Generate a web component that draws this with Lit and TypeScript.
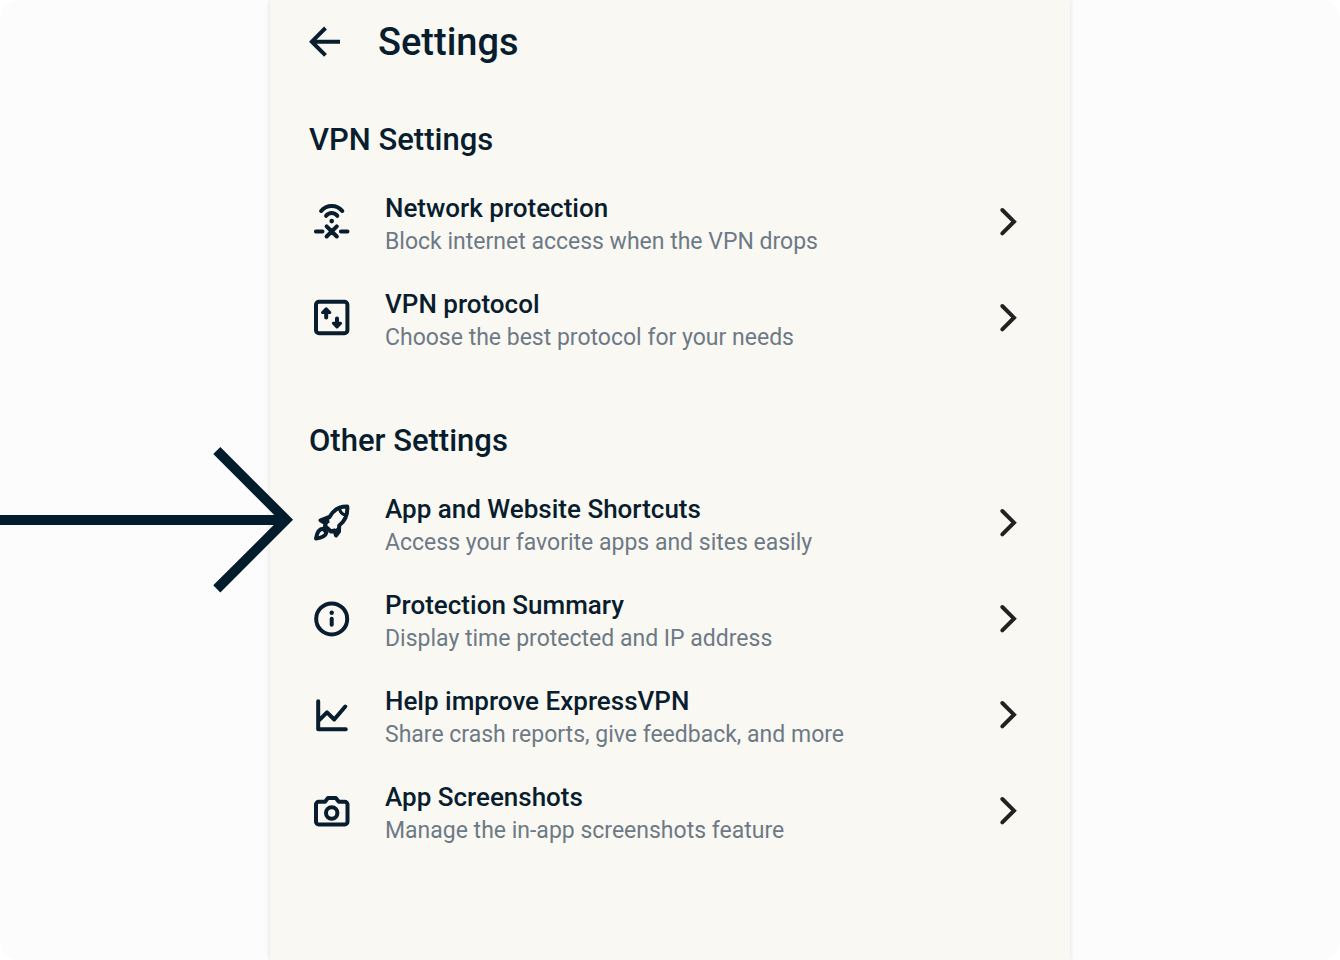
import { LitElement, html, css, svg, SVGTemplateResult } from "lit";
import { customElement, property } from "lit/decorators.js";

type IconName = "network" | "protocol" | "rocket" | "info" | "chart" | "camera";

interface SettingItem {
  icon: IconName;
  title: string;
  detail: string;
}

interface SettingGroup {
  id: string;
  heading: string;
  items: SettingItem[];
}

const ICONS: Record<IconName, SVGTemplateResult> = {
  network: svg`
    <path d="M12.1 12C17.6 5.3 27.8 5.3 33.3 12M17.1 16.8C20 13 25.4 13 28.3 16.800M6.900 32.400h6.600M31.900 32.400h6.600M17.600 27.300l10.200 10.200M27.800 27.300l-10.200 10.200" />
    <circle class="solid" cx="22.700" cy="22.100" r="2.300" />`,
  protocol: svg`
    <rect x="7" y="6.800" width="31.4" height="31.4" rx="3" />
    <path d="M17.2 22.400v-6M28 23.400v6" />
    <path class="wedge" d="M17.2 13.800l-3.600 3.800h7.200zM28 32l-3.600-3.800h7.200z" />`,
  rocket: svg`
    <g transform="translate(0 -1)">
      <path d="M38.3 7.6C31 7.5 24.6 10.5 20.5 18L11.5 21.3L16.8 24.5L16 27L19 29.7L22 32.5L25.5 31.5L27 36.5L30 32.5L30.2 26.5C36 22 38.8 15.5 38.3 7.6Z" />
      <path class="solid" d="M11 20.5L20 18L20.5 24L15.5 25ZM25 32L29.5 27L30 33L27.5 37Z" />
      <path d="M30.5 9.5C31 13 33.5 15.5 37 16" stroke-width="3" />
      <path d="M14.2 29.8C10.5 30 8 33 7 39.5C13 38.8 16.5 37 17.5 33.5Z" />
    </g>`,
  info: svg`
    <circle cx="22.7" cy="22.900" r="15.500" />
    <path d="M22.7 22.800v6" />
    <circle class="solid" cx="22.7" cy="16.800" r="2.200" />`,
  chart: svg`
    <path d="M9.2 9.200v28h27.600M9.200 29.200L18 20.300L25.200 27.500L36.300 14.500" />`,
  camera: svg`
    <path d="M9.7 13.800h6.300l3-3.800h7.800l3 3.800h6a2.700 2.700 0 0 1 2.700 2.700v17.200a2.700 2.700 0 0 1-2.700 2.700H9.700a2.700 2.700 0 0 1-2.700-2.700v-17.200a2.700 2.700 0 0 1 2.700-2.700z" />
    <circle cx="22.7" cy="25" r="5.700" />`,
};

const GROUPS: SettingGroup[] = [
  {
    id: "vpn",
    heading: "VPN Settings",
    items: [
      { icon: "network", title: "Network protection", detail: "Block internet access when the VPN drops" },
      { icon: "protocol", title: "VPN protocol", detail: "Choose the best protocol for your needs" },
    ],
  },
  {
    id: "other",
    heading: "Other Settings",
    items: [
      { icon: "rocket", title: "App and Website Shortcuts", detail: "Access your favorite apps and sites easily" },
      { icon: "info", title: "Protection Summary", detail: "Display time protected and IP address" },
      { icon: "chart", title: "Help improve ExpressVPN", detail: "Share crash reports, give feedback, and more" },
      { icon: "camera", title: "App Screenshots", detail: "Manage the in-app screenshots feature" },
    ],
  },
];

@customElement("setting-row")
class SettingRow extends LitElement {
  static styles = css`
    :host {
      display: block;
    }
    .row {
      display: flex;
      align-items: center;
      width: 100%;
      min-height: 96px;
      padding: 0 50px 0 39px;
      border: 0;
      background: none;
      color: inherit;
      font: inherit;
      text-align: left;
      cursor: pointer;
    }
    .icon {
      flex: none;
      width: 46px;
      height: 46px;
      margin-right: 30px;
      fill: none;
      stroke: currentColor;
      stroke-width: 4;
      stroke-linecap: round;
      stroke-linejoin: round;
    }
    .solid {
      fill: currentColor;
      stroke: none;
    }
    .wedge {
      fill: currentColor;
      stroke-width: 3;
    }
    .text {
      flex: 1;
      min-width: 0;
      padding-top: 5px;
    }
    .title,
    .detail {
      display: block;
      line-height: 33px;
    }
    .title {
      font-size: 26px;
      font-weight: 500;
    }
    .detail {
      font-size: 23px;
      color: #6d7a86;
    }
    .chevron {
      flex: none;
      width: 24px;
      height: 32px;
      fill: none;
      stroke: #212121;
      stroke-width: 4;
      stroke-linecap: round;
    }
  `;

  @property({ attribute: false }) item!: SettingItem;

  render() {
    const { icon, title, detail } = this.item;
    return html`
      <button class="row" type="button">
        <svg class="icon" viewBox="0 0 46 46" aria-hidden="true">${ICONS[icon]}</svg>
        <span class="text">
          <span class="title">${title}</span>
          <span class="detail">${detail}</span>
        </span>
        <svg class="chevron" viewBox="0 0 24 32" aria-hidden="true">
          <path d="M6.3 4L18 15.7L6.3 27.4" />
        </svg>
      </button>
    `;
  }
}

@customElement("app-root")
class AppRoot extends LitElement {
  static styles = css`
    :host {
      display: block;
      background: #fff;
      color: #081d2e;
      font-family: Roboto, "Liberation Sans", sans-serif;
    }
    .stage {
      position: relative;
      display: flex;
      justify-content: center;
      min-height: 100vh;
      border-radius: 20px;
      background: #fcfcfc;
      overflow: hidden;
    }
    .panel {
      width: 60%;
      min-width: 560px;
      max-width: 800px;
      background: #faf8f3;
      box-shadow: 0 0 5px rgba(0, 20, 40, 0.12);
    }
    .bar {
      display: flex;
      align-items: center;
      gap: 37px;
      padding: 18px 39px 0;
    }
    .back {
      display: flex;
      padding: 0;
      border: 0;
      background: none;
      color: inherit;
      cursor: pointer;
    }
    .back svg {
      width: 32px;
      height: 32px;
      fill: none;
      stroke: currentColor;
      stroke-width: 4;
    }
    h1,
    h2 {
      margin: 0;
      font-weight: 500;
    }
    h1 {
      font-size: 38px;
      line-height: 48px;
    }
    h2 {
      padding: 0 39px;
      font-size: 31px;
      line-height: 40px;
    }
    .group {
      padding-top: 54px;
    }
    .list {
      margin: 0;
      padding: 14px 0 1px;
      list-style: none;
    }
    .pointer {
      position: absolute;
      top: 440px;
      left: 0;
      right: calc(50% + 376px);
      height: 160px;
      display: flex;
      align-items: center;
      color: #001c2d;
    }
    .shaft {
      flex: 1;
      height: 10px;
      margin-right: -80px;
      background: currentColor;
    }
    .head {
      flex: none;
      width: 86px;
      height: 160px;
      fill: none;
      stroke: currentColor;
      stroke-width: 10;
    }
  `;

  render() {
    return html`
      <div class="stage">
        <main class="panel">
          <header class="bar">
            <button class="back" type="button" aria-label="Back">
              <svg viewBox="0 0 32 32" aria-hidden="true">
                <path d="M16.5 2L2.8 15.700L16.500 29.400M2.800 15.700H31" />
              </svg>
            </button>
            <h1>Settings</h1>
          </header>
          ${GROUPS.map(
            (group) => html`
              <section class="group" aria-labelledby=${group.id}>
                <h2 id=${group.id}>${group.heading}</h2>
                <ul class="list">
                  ${group.items.map((item) => html`<li><setting-row .item=${item}></setting-row></li>`)}
                </ul>
              </section>
            `
          )}
        </main>
        <div class="pointer" aria-hidden="true">
          <div class="shaft"></div>
          <svg class="head" viewBox="0 0 86 160">
            <path d="M8.8 10.5L78 79.7L8.8 148.9" />
          </svg>
        </div>
      </div>
    `;
  }
}
